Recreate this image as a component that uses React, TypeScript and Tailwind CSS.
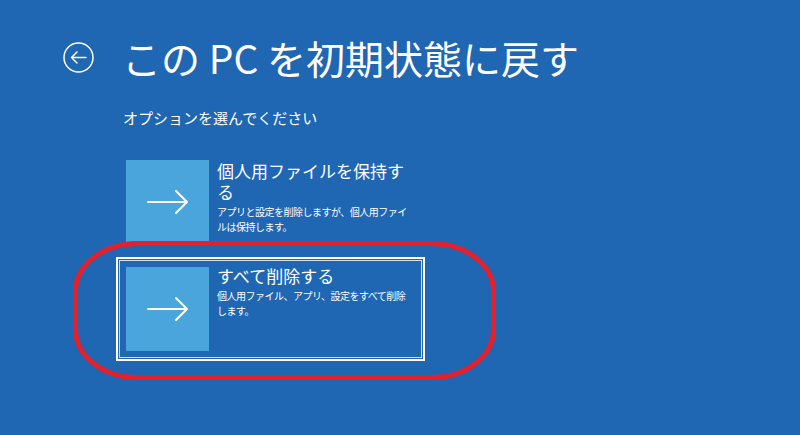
import React from 'react';

const font = '"Noto Sans CJK JP", "Noto Sans", sans-serif';

function BackIcon() {
  return (
    <svg width="31" height="31" viewBox="0 0 31 31" fill="none" stroke="white" strokeWidth="1.5">
      <circle cx="15.5" cy="15.5" r="14.5" />
      <path d="M23 15.5H8.5M14 10L8.5 15.5L14 21" strokeLinecap="round" strokeLinejoin="round" />
    </svg>
  );
}

function ArrowTile() {
  return (
    <div className="w-[83px] h-[84px] shrink-0 bg-[#4aa5dd] flex items-center justify-center">
      <svg width="44" height="26" viewBox="0 0 44 26" fill="none" stroke="white" strokeWidth="2">
        <path d="M2 13H41M30 2L41 13L30 24" strokeLinecap="round" strokeLinejoin="round" />
      </svg>
    </div>
  );
}

type OptionProps = {
  title: React.ReactNode;
  desc: React.ReactNode;
  selected?: boolean;
};

function Option({ title, desc, selected }: OptionProps) {
  return (
    <div className={`w-[309px] h-[104px] border-2 p-px ${selected ? 'border-white' : 'border-transparent'}`}>
      <div className={`h-full border flex gap-[8px] p-[6px] ${selected ? 'border-white/80' : 'border-transparent'}`}>
        <ArrowTile />
        <div className="text-white whitespace-nowrap">
          <div className={`text-[17px] leading-[21px] ${selected ? '-mt-[2px]' : ''}`}>{title}</div>
          <div className="mt-[2px] text-[10px] leading-[15px] tracking-[-0.5px]">{desc}</div>
        </div>
      </div>
    </div>
  );
}

export default function App() {
  return (
    <div className="relative w-[800px] h-[435px] overflow-hidden bg-[#1f66b3] text-white" style={{ fontFamily: font }}>
      <div className="flex items-center pt-[34px] pl-[63px]">
        <BackIcon />
        <h1 className="ml-[28px] text-[39px] leading-[46px] font-normal">この PC を初期状態に戻す</h1>
      </div>
      <p className="ml-[123px] mt-[28px] text-[15px] leading-[20px]">オプションを選んでください</p>

      <div className="ml-[116px] mt-[22px] flex flex-col gap-[3px]">
        <Option
          title={<>個人用ファイルを保持す<br />る</>}
          desc={<>アプリと設定を削除しますが、個人用ファイ<br />ルは保持します。</>}
        />
        <Option
          selected
          title="すべて削除する"
          desc={<>個人用ファイル、アプリ、設定をすべて削除<br />します。</>}
        />
      </div>

      {/* red annotation around the selected option */}
      <svg className="absolute left-0 top-0 pointer-events-none" width="800" height="435" fill="none">
        <rect x="75.5" y="243.5" width="418" height="134" rx="62" ry="48" stroke="#e3202b" strokeWidth="5" />
      </svg>
    </div>
  );
}
